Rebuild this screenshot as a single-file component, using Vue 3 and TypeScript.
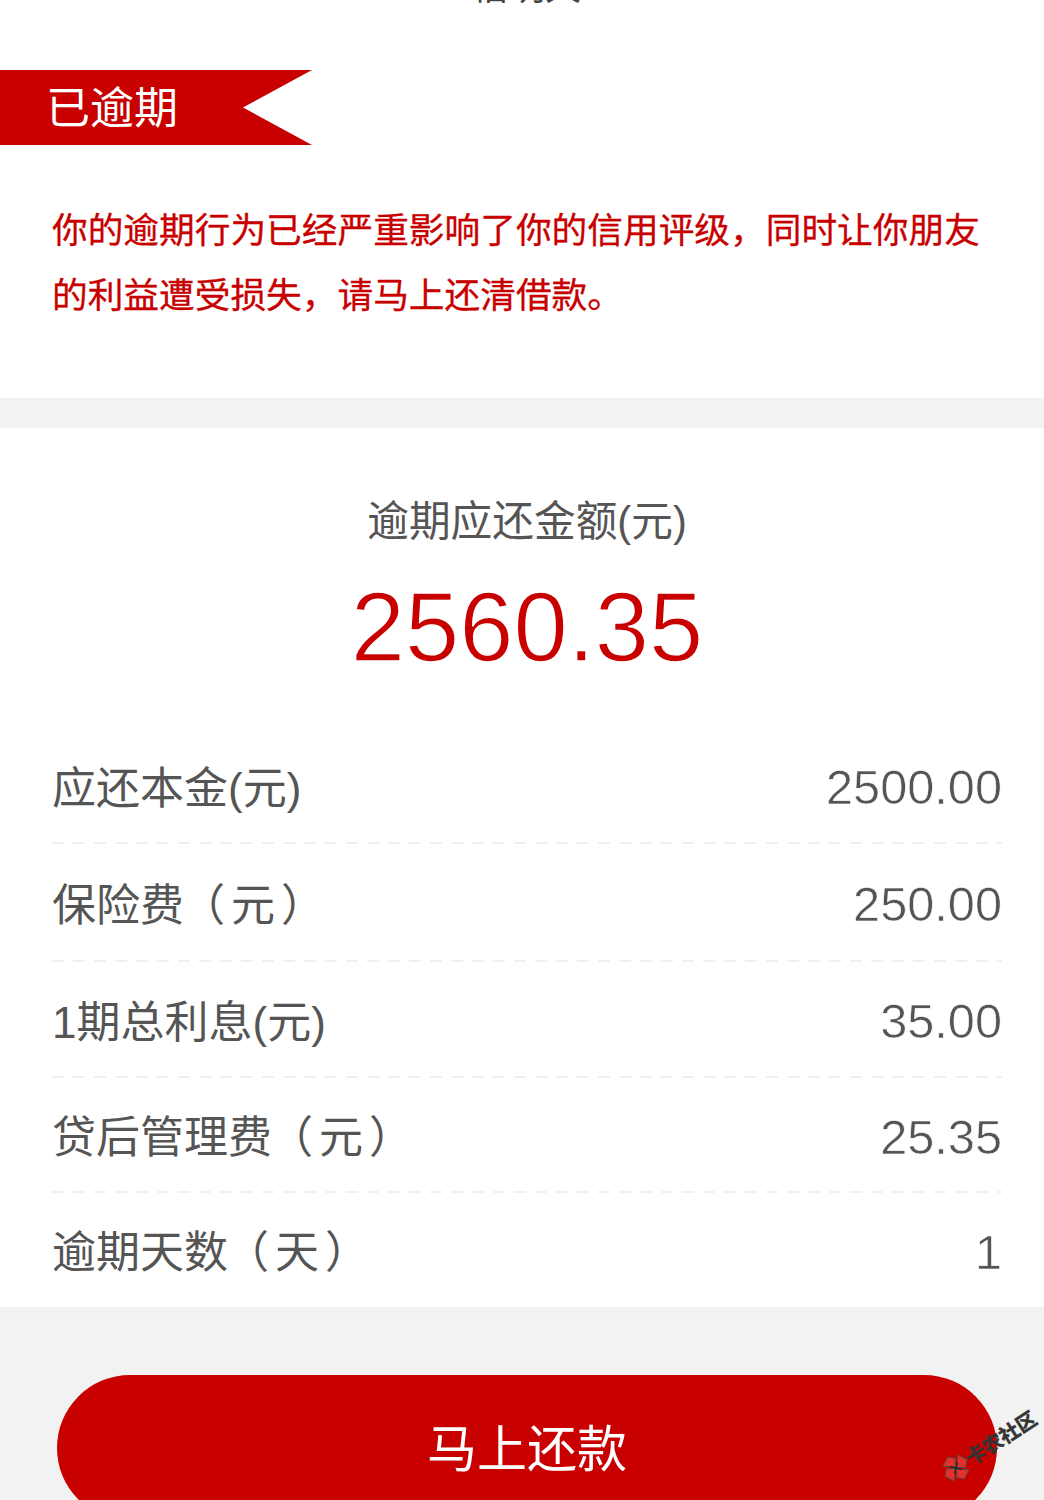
<script setup lang="ts">
interface FeeRow {
  name: string
  unit: string
  value: string
}

const rows: FeeRow[] = [
  { name: '应还本金', unit: '(元)', value: '2500.00' },
  { name: '保险费', unit: '（元）', value: '250.00' },
  { name: '1期总利息', unit: '(元)', value: '35.00' },
  { name: '贷后管理费', unit: '（元）', value: '25.35' },
  { name: '逾期天数', unit: '（天）', value: '1' },
]
</script>

<template>
  <div class="page">
    <div class="topbar">
      <span class="back">Um</span>
      <span class="title">借明天</span>
    </div>

    <section class="notice">
      <div class="ribbon">已逾期</div>
      <p class="notice-text">你的逾期行为已经严重影响了你的信用评级，同时让你朋友的利益遭受损失，请马上还清借款。</p>
    </section>

    <section class="detail">
      <div class="amount-label">逾期应还金额(元)</div>
      <div class="amount">2560.35</div>
      <ul class="rows">
        <li v-for="row in rows" :key="row.name" class="row">
          <span class="label">{{ row.name }}<span :class="{ wide: row.unit.startsWith('（') }">{{ row.unit }}</span></span>
          <span class="value">{{ row.value }}</span>
        </li>
      </ul>
    </section>

    <div class="action">
      <button class="repay" type="button">马上还款</button>
    </div>

    <div class="watermark">
      <svg width="28" height="28" viewBox="0 0 26 26">
        <g fill="#e8302a" stroke="#555" stroke-width="0.9">
          <path d="M13 12 L4 5 L12 0.5 L17 5Z" />
          <path d="M14 13 L21 4 L25.5 12 L21 17Z" />
          <path d="M13 14 L22 21 L14 25.5 L9 21Z" />
          <path d="M12 13 L5 22 L0.5 14 L5 9Z" />
        </g>
        <path d="M9 9 L17 17 M17 9 L9 17" stroke="#222" stroke-width="1.2" />
      </svg>
      <span>卡农社区</span>
    </div>
  </div>
</template>

<style>
html,
body {
  margin: 0;
  background: #f2f2f2;
}
</style>

<style scoped>
.page {
  position: relative;
  width: 1044px;
  height: 1500px;
  overflow: hidden;
  background: #f2f2f2;
  font-family: 'Liberation Sans', 'Noto Sans CJK SC', sans-serif;
  color: #555;
}
.topbar {
  display: flex;
  justify-content: center;
  position: relative;
  height: 70px;
  padding: 0 42px 0 52px;
  background: #fff;
  overflow: hidden;
}
.title {
  margin-top: -32px;
  font-size: 36px;
  line-height: 40px;
  height: 40px;
  color: #444;
}
.back {
  position: absolute;
  left: 34px;
  top: -35px;
  font-size: 36px;
  line-height: 40px;
  color: #c80000;
}
.notice {
  background: #fff;
  height: 328px;
}
.ribbon {
  width: 266px;
  height: 75px;
  padding-left: 46px;
  font-size: 44px;
  line-height: 78px;
  color: #fff;
  background: #c80000;
  clip-path: polygon(0 0, 100% 0, 243px 50%, 100% 100%, 0 100%);
}
.notice-text {
  margin: 54px 42px 0 52px;
  font-size: 35.7px;
  line-height: 65px;
  color: #c80000;
  -webkit-text-stroke: 0.3px #c80000;
}
.detail {
  margin-top: 30px;
  padding: 69px 42px 0 52px;
  height: 810px;
  background: #fff;
}
.amount-label {
  text-align: center;
  font-size: 41.7px;
  line-height: 50px;
}
.amount {
  margin-top: 26px;
  text-align: center;
  font-size: 97.5px;
  line-height: 110px;
  color: #c80000;
  -webkit-text-stroke: 1.4px #fff;
}
.rows {
  list-style: none;
  margin: 45px 0 0;
  padding: 0;
}
.row {
  display: flex;
  justify-content: space-between;
  align-items: center;
  height: 115px;
  padding-top: 2px;
  box-sizing: border-box;
  font-size: 44px;
  background: repeating-linear-gradient(90deg, #f0f0f0 0 12px, transparent 12px 21px) left bottom / 100% 2px no-repeat;
}
.row:nth-child(1),
.row:nth-child(3) {
  height: 116px;
}
.row:nth-child(2) {
  height: 118px;
}
.row:last-child {
  background: none;
}
.label {
  padding-bottom: 5px;
}
.wide {
  margin-left: -3px;
  letter-spacing: 6px;
}
.value {
  font-size: 48.7px;
  -webkit-text-stroke: 0.6px #fff;
}
.action {
  padding: 68px 47px 0 57px;
}
.repay {
  display: block;
  width: 100%;
  height: 146px;
  padding: 0 0 6px;
  border: 0;
  border-radius: 73px;
  background: #c80000;
  color: #fff;
  font-family: inherit;
  font-size: 50px;
}
.watermark {
  position: absolute;
  left: 942px;
  top: 1454px;
  display: flex;
  align-items: center;
  gap: 0;
  white-space: nowrap;
  font-size: 20px;
  line-height: 28px;
  font-weight: 700;
  color: #333;
  -webkit-text-stroke: 0.5px #333;
  transform: rotate(-33deg);
  transform-origin: 14px 14px;
}
</style>
